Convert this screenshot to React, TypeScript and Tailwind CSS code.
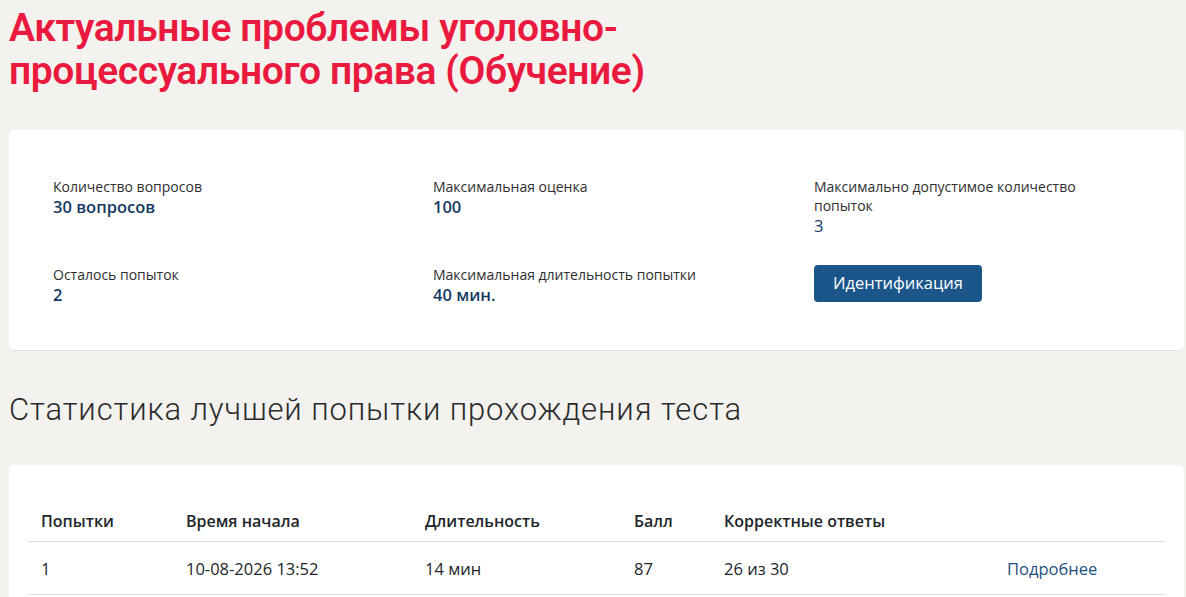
import React from "react";

const info = [
  { label: "Количество вопросов", value: "30 вопросов", bold: true },
  { label: "Максимальная оценка", value: "100", bold: true },
  { label: "Максимально допустимое количество попыток", value: "3", bold: false },
  { label: "Осталось попыток", value: "2", bold: true },
  { label: "Максимальная длительность попытки", value: "40 мин.", bold: true },
];

const headFont = { fontFamily: "Roboto, 'Noto Sans', sans-serif" };
const bodyFont = { fontFamily: "'Open Sans', 'Noto Sans', sans-serif" };

function Info({ label, value, bold }: { label: string; value: string; bold: boolean }) {
  return (
    <div className="flex flex-col">
      <span className="text-[14px] leading-[19px] text-[#2e2e2e]">{label}</span>
      <span
        className={`text-[16.5px] leading-[22px] text-[#163a63] ${bold ? "font-semibold" : "font-normal"}`}
      >
        {value}
      </span>
    </div>
  );
}

export default function App() {
  return (
    <div className="min-h-[597px] bg-[#f3f2ef] pl-[9px] pr-[2px] pt-[7px] pb-[20px]" style={bodyFont}>
      <h1
        className="text-[39px] leading-[43px] font-semibold text-[#ea1a3f] tracking-[-0.4px]"
        style={headFont}
      >
        Актуальные проблемы уголовно-
        <br />
        процессуального права (Обучение)
      </h1>

      <section className="mt-[37px] bg-white rounded-[5px] border-b border-[#e4e2de] pl-[44px] pt-[47px] pb-[44px]">
        <div className="grid grid-cols-[380px_381px_1fr] gap-y-[28px]">
          <Info {...info[0]} />
          <Info {...info[1]} />
          <div className="flex flex-col">
            <span className="text-[14px] leading-[19px] text-[#2e2e2e] w-[280px]">
              {info[2].label}
            </span>
            <span className="text-[16.5px] leading-[22px] text-[#163a63]">{info[2].value}</span>
          </div>
          <Info {...info[3]} />
          <Info {...info[4]} />
          <div>
            <button className="h-[37px] w-[168px] rounded-[4px] bg-[#1b568b] text-white text-[16.5px]">
              Идентификация
            </button>
          </div>
        </div>
      </section>

      <h2
        className="mt-[41px] text-[31px] leading-[36px] font-light text-[#2a2a2a] tracking-[0.9px]"
        style={headFont}
      >
        Статистика лучшей попытки прохождения теста
      </h2>

      <section className="mt-[37px] bg-white rounded-[5px] px-[19px] pt-[36px] pb-[20px]">
        <table className="w-full table-fixed border-collapse text-[16.5px] text-[#212529]">
          <colgroup>
            <col className="w-[145px]" />
            <col className="w-[239px]" />
            <col className="w-[209px]" />
            <col className="w-[90px]" />
            <col className="w-[283px]" />
            <col />
          </colgroup>
          <thead>
            <tr className="border-b border-[#dedcd8]">
              <th className="text-left text-[16px] font-semibold px-[13px] h-[40px]">Попытки</th>
              <th className="text-left text-[16px] font-semibold px-[13px]">Время начала</th>
              <th className="text-left text-[16px] font-semibold px-[13px]">Длительность</th>
              <th className="text-left text-[16px] font-semibold px-[13px]">Балл</th>
              <th className="text-left text-[16px] font-semibold px-[13px]">Корректные ответы</th>
              <th></th>
            </tr>
          </thead>
          <tbody>
            <tr className="border-b border-[#dedcd8]">
              <td className="px-[13px] pt-[4px] h-[53px]">1</td>
              <td className="px-[13px] pt-[4px]">10-08-2026 13:52</td>
              <td className="px-[13px] pt-[4px]">14 мин</td>
              <td className="px-[13px] pt-[4px]">87</td>
              <td className="px-[13px] pt-[4px]">26 из 30</td>
              <td className="px-[13px] pt-[4px] text-[#1d4f80]">Подробнее</td>
            </tr>
          </tbody>
        </table>
      </section>
    </div>
  );
}
